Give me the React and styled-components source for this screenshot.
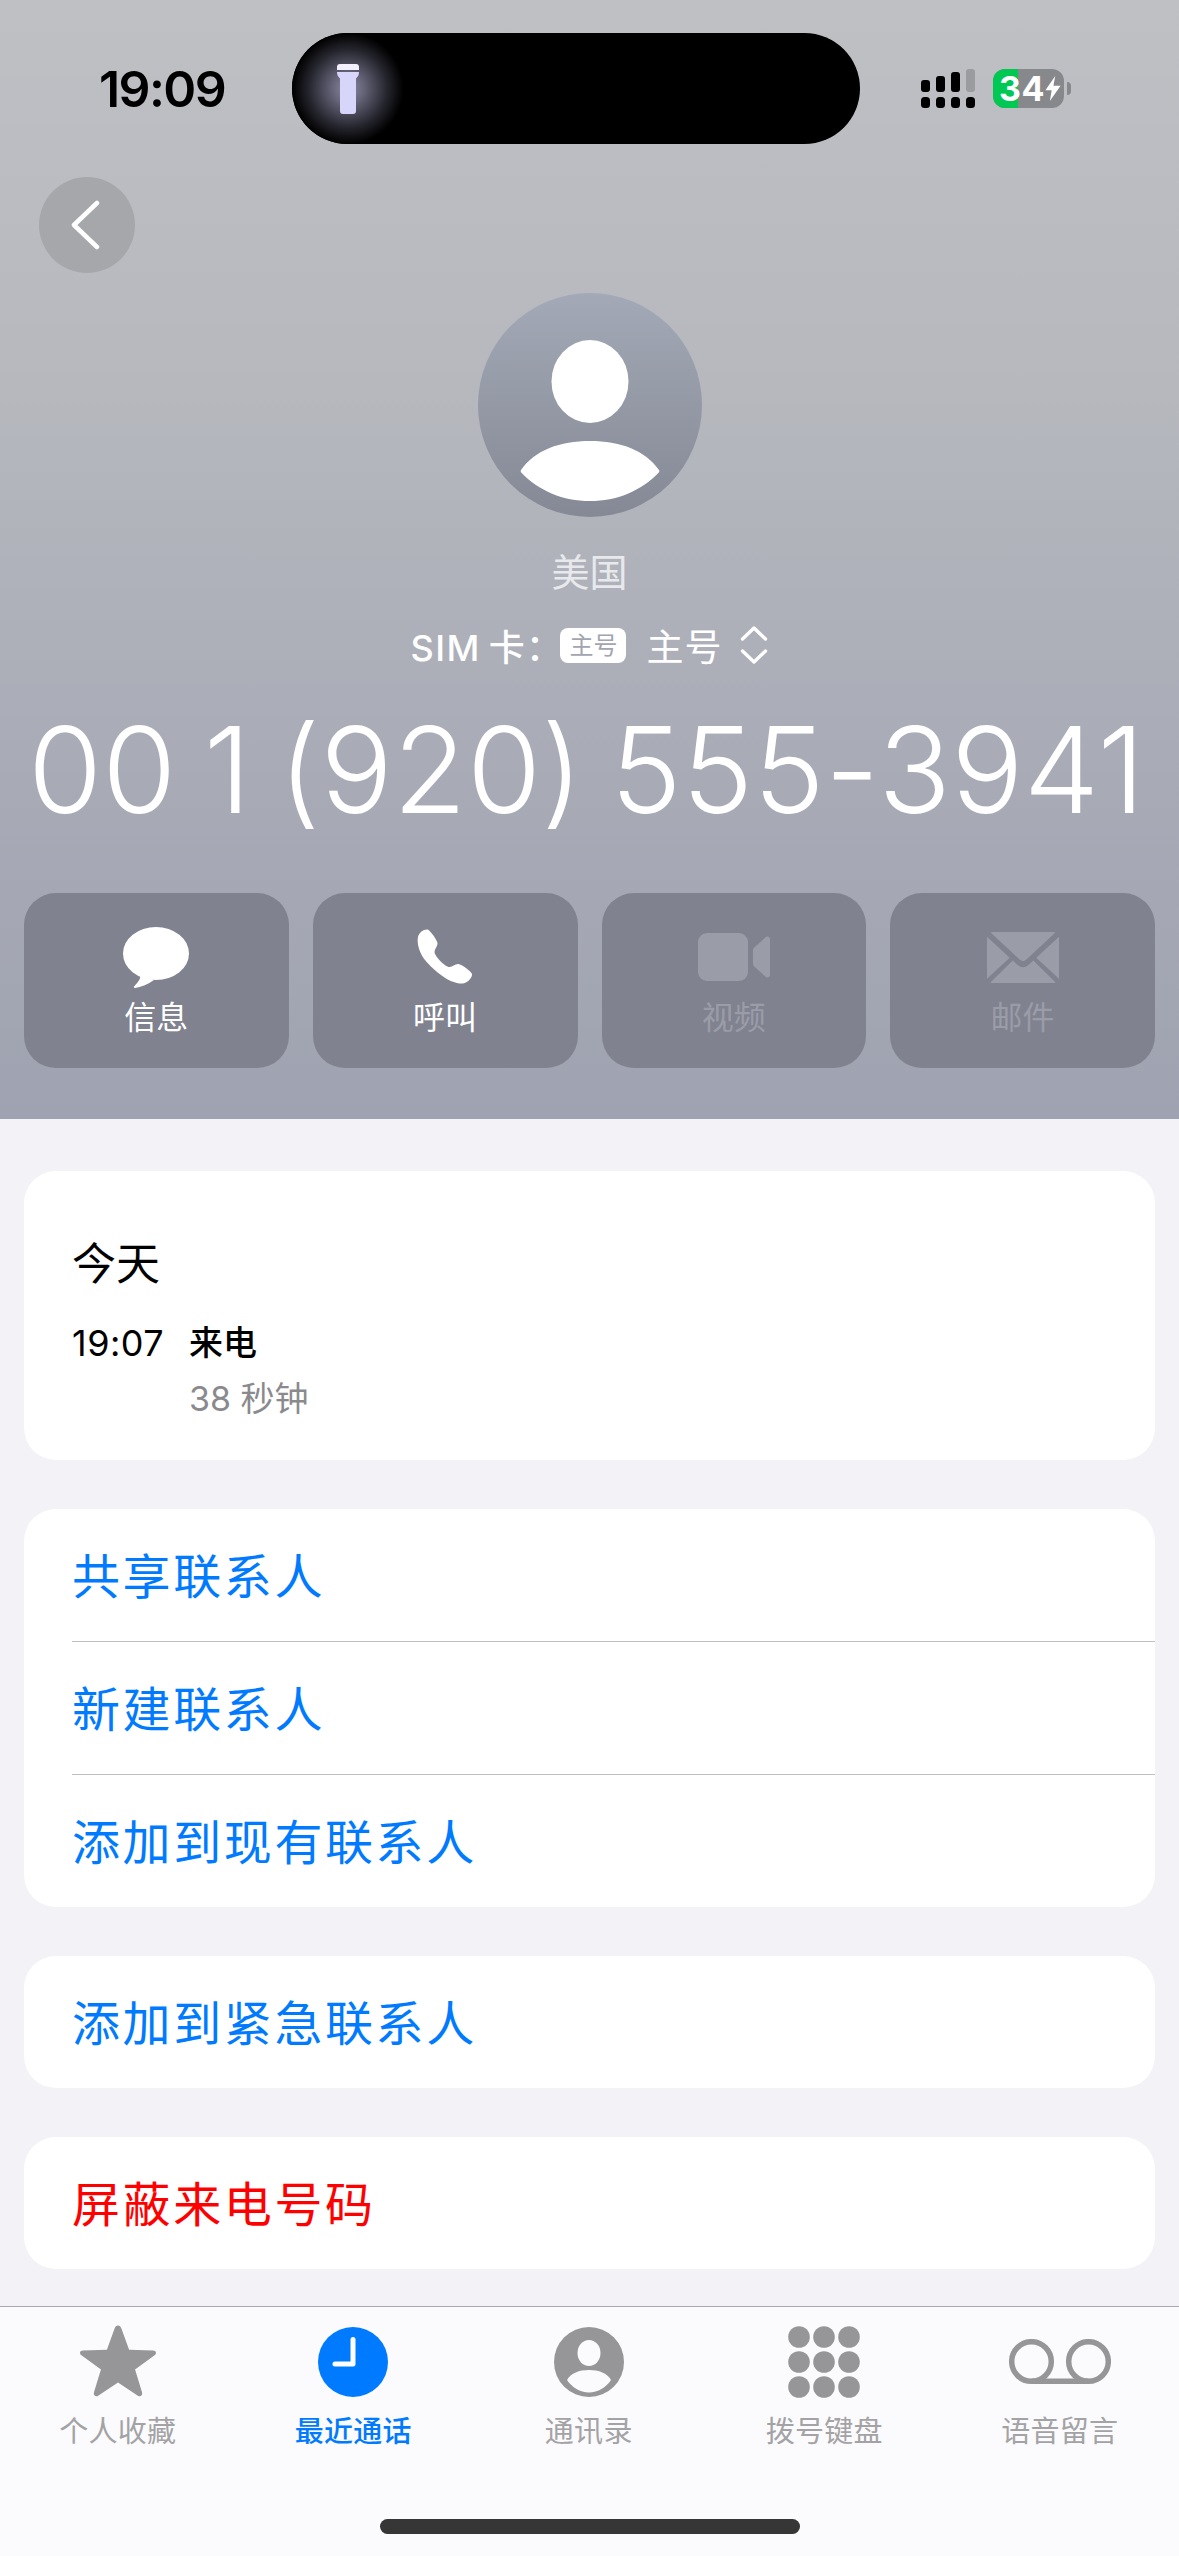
import React from "react";
import styled, { createGlobalStyle } from "styled-components";

const GlobalStyle = createGlobalStyle`
  * {
    box-sizing: border-box;
  }
  html,
  body {
    margin: 0;
    padding: 0;
    background: #f2f2f7;
  }
  body {
    font-family: "Inter", "Noto Sans CJK SC", sans-serif;
  }
`;

const actions = [
  { label: "信息", Icon: MessageIcon },
  { label: "呼叫", Icon: PhoneIcon },
  { label: "视频", Icon: VideoIcon, disabled: true },
  { label: "邮件", Icon: MailIcon, disabled: true },
];

const tabs = [
  { label: "个人收藏", Icon: StarIcon },
  { label: "最近通话", Icon: ClockIcon, active: true },
  { label: "通讯录", Icon: ContactIcon },
  { label: "拨号键盘", Icon: KeypadIcon },
  { label: "语音留言", Icon: VoicemailIcon },
];

function MessageIcon() {
  return (
    <svg width="66" height="61" viewBox="0 0 66 61" fill="#fff">
      <ellipse cx="33" cy="26.500" rx="33" ry="26.500" />
      <path d="M15 46c2.500 1.500 3.500 5-.5 9.500-1.500 1.700-2.500 3.200-3.500 4-.6.700.2 1.500 1 1.400 6-.5 12-3.200 19-7.900z" />
    </svg>
  );
}

function PhoneIcon() {
  return (
    <svg width="56" height="56" viewBox="0 0 56 56" fill="#fff">
      <path d="M1 8C2 3 7 0 10.500.5 13 1 20 11 20.500 14 21 17 17.500 20 17.500 23 17.500 27 28 38 32.500 38 35.500 38 38.500 34.500 41.500 35 44.500 35.500 54 42 55 45 55.500 48 51 54 46 54.500 34 55.500 18 43 8 31 3 25-.5 15 1 8z" />
    </svg>
  );
}

function VideoIcon() {
  return (
    <svg width="72" height="48" viewBox="0 0 72 48" fill="#9a9ca8">
      <rect x="0" y="0" width="50" height="48" rx="9" />
      <path d="M55 17.500c0-1.200.4-2.200 1.300-3L67.500 4.300c1.700-1.500 4.500-.5 4.500 1.800v35.800c0 2.300-2.800 3.300-4.500 1.800L56.300 33.500c-.9-.8-1.300-1.800-1.300-3z" />
    </svg>
  );
}

function MailIcon() {
  return (
    <svg width="72" height="51" viewBox="0 0 72 51" fill="#9a9ca8">
      <path d="M6 0h60c1 0 1.800.2 2.400.6L39.700 27.200c-1.300 1.200-2.500 1.800-3.700 1.800s-2.400-.6-3.700-1.800L3.600.6C4.200.2 5 0 6 0z" />
      <path d="M0 4.800 22.700 25.800 0 46.800zM72 4.800 49.300 25.800 72 46.800z" />
      <path d="M3.400 50.400 25.700 28.600l4 3.700c2.200 2 4.300 3 6.300 3s4.100-1 6.300-3l4-3.700 22.300 21.800c-.6.400-1.400.6-2.300.6H5.700c-.9 0-1.700-.2-2.300-.6z" />
    </svg>
  );
}

function StarIcon({ color }) {
  return (
    <svg width="76" height="74" viewBox="0 0 78 75" fill={color}>
      <path d="M39 0c1.700 0 2.800 1 3.500 3l7.900 21.900 24.600.7c2 .1 3 .9 3 2.400 0 1-.6 2-1.800 2.900L56.500 45.300l7 22.700c.5 1.700.4 3.100-.5 4-1.100 1.100-2.500 1-4-.1L39 58.500 19 71.900c-1.500 1.100-2.900 1.200-4 .1-.9-.9-1-2.300-.5-4l7-22.700L1.800 30.900C.6 30 0 29 0 28c0-1.500 1-2.300 3-2.400l24.600-.7L35.500 3c.7-2 1.800-3 3.500-3z" />
    </svg>
  );
}

function ClockIcon({ color }) {
  return (
    <svg width="70" height="70" viewBox="0 0 70 70">
      <circle cx="35" cy="35" r="35" fill={color} />
      <path d="M35 12.500v24.500H17" fill="none" stroke="#fff" strokeWidth="5" strokeLinecap="round" strokeLinejoin="round" />
    </svg>
  );
}

function ContactIcon({ color }) {
  return (
    <svg width="70" height="70" viewBox="0 0 70 70">
      <circle cx="35" cy="35" r="35" fill={color} />
      <ellipse cx="35" cy="26" rx="11.500" ry="13" fill="#fbfbfd" />
      <path d="M13 53C17 46 25 43 35 43s18 3 22 10C52 60.500 44 65.500 35 65.500S18 60.500 13 53z" fill="#fbfbfd" />
    </svg>
  );
}

function KeypadIcon({ color }) {
  const spots = [11, 36, 61];
  return (
    <svg width="72" height="72" viewBox="0 0 72 72" fill={color}>
      {spots.map((y) =>
        spots.map((x) => <circle key={`${x}-${y}`} cx={x} cy={y} r="10.800" />)
      )}
    </svg>
  );
}

function VoicemailIcon({ color }) {
  return (
    <svg width="102" height="46" viewBox="0 0 102 46" fill="none" stroke={color} strokeWidth="5.500">
      <circle cx="22.500" cy="22.500" r="19.800" />
      <circle cx="79.500" cy="22.500" r="19.800" />
      <path d="M22.500 42.300h57" />
    </svg>
  );
}

function SignalIcon() {
  const heights = [11, 15, 19];
  return (
    <svg width="54" height="39" viewBox="0 0 54 39" fill="#000">
      {heights.map((h, i) => (
        <rect key={h} x={i * 15} y={23 - h - 1} width="9" height={h + 1} rx="3" />
      ))}
      <rect x="45" y="0" width="9" height="23" rx="3" fill="#9b9c9f" />
      {[0, 15, 30, 45].map((x) => (
        <rect key={x} x={x} y="28" width="9" height="11" rx="3.500" />
      ))}
    </svg>
  );
}

function App() {
  return (
    <Screen>
      <GlobalStyle />
      <Header>
        <StatusBar>
          <Time>19:09</Time>
          <Island>
            <Glow>
              <svg width="24" height="50" viewBox="0 0 24 50">
                <path d="M1 3c0-1.700 1-3 3-3h16c2 0 3 1.300 3 3v3H1z" fill="#f4effd" />
                <path d="M1 8h22c0 3-1 4.500-3 6.500V47c0 1.800-1 3-3 3H7c-2 0-3-1.200-3-3V14.500C2 12.500 1 11 1 8z" fill="#d8d5fb" />
              </svg>
            </Glow>
          </Island>
          <StatusIcons>
            <SignalIcon />
            <Battery>
              <BatteryLevel />
              <BatteryText>34</BatteryText>
              <svg width="16" height="25" viewBox="0 0 17 28" fill="#fff">
                <path d="M11 0 0 16h7l-2 12L17 11H9z" />
              </svg>
            </Battery>
            <BatteryTip />
          </StatusIcons>
        </StatusBar>

        <BackButton aria-label="返回">
          <svg width="32" height="50" viewBox="0 0 32 50" fill="none" stroke="#fff" strokeWidth="4.500" strokeLinecap="round" strokeLinejoin="round">
            <path d="M28 3 5 25l23 22" />
          </svg>
        </BackButton>

        <Avatar>
          <svg width="224" height="224" viewBox="0 0 224 224" fill="#fff">
            <ellipse cx="112" cy="88.500" rx="38.500" ry="41.500" />
            <path d="M43 177C57 157 82 148 112 148s55 9 69 29c.5.700.5 1.500 0 2.200C163 198 139 208 112 208s-51-10-69-28.800c-.5-.7-.5-1.500 0-2.200z" />
          </svg>
        </Avatar>

        <Region>美国</Region>
        <SimRow>
          <SimLabel>SIM 卡：</SimLabel>
          <SimBadge>主号</SimBadge>
          <SimName>主号</SimName>
          <svg width="28" height="38" viewBox="0 0 28 38" fill="none" stroke="#fff" strokeWidth="3.400" strokeLinecap="round" strokeLinejoin="round">
            <path d="M2.500 13 14 2l11.500 11M2.500 25 14 36l11.500-11" />
          </svg>
        </SimRow>
        <PhoneNumber>00 1 (920) 555-3941</PhoneNumber>

        <Actions>
          {actions.map(({ label, Icon, disabled }) => (
            <ActionButton key={label} $disabled={disabled}>
              <ActionIcon>
                <Icon />
              </ActionIcon>
              <span>{label}</span>
            </ActionButton>
          ))}
        </Actions>
      </Header>

      <Content>
        <HistoryCard>
          <HistoryDate>今天</HistoryDate>
          <HistoryRow>
            <HistoryTime>19:07</HistoryTime>
            <div>
              <HistoryType>来电</HistoryType>
              <HistoryLength>38 秒钟</HistoryLength>
            </div>
          </HistoryRow>
        </HistoryCard>

        <Card>
          <Row>共享联系人</Row>
          <Row>新建联系人</Row>
          <Row>添加到现有联系人</Row>
        </Card>
        <Card>
          <Row>添加到紧急联系人</Row>
        </Card>
        <Card>
          <Row $danger>屏蔽来电号码</Row>
        </Card>
      </Content>

      <TabBar>
        <Tabs>
          {tabs.map(({ label, Icon, active }) => (
            <Tab key={label} $active={active}>
              <TabIcon>
                <Icon color={active ? "#007aff" : "#969698"} />
              </TabIcon>
              <span>{label}</span>
            </Tab>
          ))}
        </Tabs>
        <HomeIndicator />
      </TabBar>
    </Screen>
  );
}

const Screen = styled.div`
  width: 1179px;
  height: 2556px;
  display: flex;
  flex-direction: column;
  overflow: hidden;
  background: #f2f2f7;
`;

const Header = styled.header`
  height: 1119px;
  flex: none;
  padding-top: 33px;
  display: flex;
  flex-direction: column;
  background: linear-gradient(180deg, #bfc0c4 0%, #b6b8be 35%, #a8abb6 70%, #9fa2b0 100%);
`;

const StatusBar = styled.div`
  height: 111px;
  display: flex;
  align-items: center;
  padding-left: 99px;
`;

const Time = styled.div`
  width: 193px;
  font-size: 50px;
  font-weight: 600;
  letter-spacing: -1.600px;
  color: #000;
`;

const Island = styled.div`
  width: 568px;
  height: 111px;
  border-radius: 56px;
  background: #000;
  overflow: hidden;
`;

const Glow = styled.div`
  width: 112px;
  height: 111px;
  display: flex;
  align-items: center;
  justify-content: center;
  background: radial-gradient(circle closest-side, #8d8ca6 0%, #5b5a6d 35%, #23232b 72%, #000 100%);
`;

const StatusIcons = styled.div`
  margin-left: 61px;
  display: flex;
  align-items: center;
`;

const Battery = styled.div`
  position: relative;
  width: 71px;
  height: 39px;
  margin-left: 18px;
  border-radius: 12px;
  overflow: hidden;
  background: #87888c;
  display: flex;
  align-items: center;
  padding-left: 6px;
  color: #fff;
`;

const BatteryLevel = styled.div`
  position: absolute;
  left: 0;
  top: 0;
  bottom: 0;
  width: 25px;
  background: #00c853;
`;

const BatteryText = styled.span`
  position: relative;
  font-size: 34px;
  font-weight: 700;
  letter-spacing: 0.5px;
`;

const BatteryTip = styled.div`
  width: 4px;
  height: 13px;
  margin-left: 3px;
  border-radius: 0 4px 4px 0;
  background: #87888c;
`;

const BackButton = styled.button`
  width: 96px;
  height: 96px;
  margin: 33px 0 0 39px;
  padding: 0 5px 0 0;
  flex: none;
  border: none;
  border-radius: 50%;
  background: #a5a7ab;
  display: flex;
  align-items: center;
  justify-content: center;
`;

const Avatar = styled.div`
  width: 224px;
  height: 224px;
  margin: 20px auto 0;
  flex: none;
  border-radius: 50%;
  overflow: hidden;
  background: linear-gradient(180deg, #a4a9b7 0%, #858995 100%);
`;

const Region = styled.div`
  margin-top: 29px;
  text-align: center;
  font-size: 38px;
  line-height: 52px;
  color: #e8e9ec;
`;

const SimRow = styled.div`
  margin-top: 22px;
  height: 50px;
  display: flex;
  align-items: center;
  justify-content: center;
  color: #fff;
  svg {
    margin-left: 18px;
  }
`;

const SimLabel = styled.span`
  font-size: 36px;
  font-weight: 500;
  letter-spacing: 1.400px;
  word-spacing: -3px;
`;

const SimBadge = styled.span`
  width: 66px;
  height: 35px;
  margin: 0 20px 0 -3px;
  border-radius: 8px;
  background: #fff;
  color: #a2a5b0;
  font-size: 24px;
  line-height: 35px;
  text-align: center;
`;

const SimName = styled.span`
  font-size: 37px;
  letter-spacing: 1px;
`;

const PhoneNumber = styled.div`
  margin-top: 27px;
  padding-right: 6px;
  text-align: center;
  font-size: 120px;
  line-height: 146px;
  font-weight: 340;
  letter-spacing: 0.3px;
  word-spacing: -7px;
  white-space: nowrap;
  color: #fff;
`;

const Actions = styled.div`
  margin-top: 50px;
  padding: 0 24px;
  display: grid;
  grid-template-columns: repeat(4, 1fr);
  gap: 24px;
`;

const ActionButton = styled.div`
  height: 175px;
  padding-top: 31px;
  border-radius: 32px;
  background: #80828f;
  display: flex;
  flex-direction: column;
  align-items: center;
  font-size: 32px;
  line-height: 44px;
  color: ${(p) => (p.$disabled ? "#9a9ca8" : "#fff")};
`;

const ActionIcon = styled.div`
  height: 66px;
  margin-bottom: 6px;
  display: flex;
  align-items: center;
  justify-content: center;
`;

const Content = styled.main`
  flex: 1;
  padding: 52px 24px 0;
  display: flex;
  flex-direction: column;
  gap: 49px;
`;

const Card = styled.section`
  border-radius: 32px;
  background: #fff;
  overflow: hidden;
`;

const HistoryCard = styled(Card)`
  height: 289px;
  padding: 64px 48px 0;
`;

const HistoryDate = styled.div`
  font-size: 44px;
  line-height: 58px;
  color: #000;
`;

const HistoryRow = styled.div`
  margin-top: 27px;
  display: flex;
`;

const HistoryTime = styled.div`
  width: 117px;
  font-size: 36px;
  line-height: 46px;
  letter-spacing: 0.5px;
  color: #000;
`;

const HistoryType = styled.div`
  font-size: 34px;
  line-height: 46px;
  font-weight: 500;
  color: #000;
`;

const HistoryLength = styled.div`
  margin-top: 10px;
  font-size: 34px;
  line-height: 46px;
  color: #8a8a8e;
`;

const Row = styled.div`
  height: 132px;
  margin-left: 48px;
  padding-bottom: 4px;
  display: flex;
  align-items: center;
  font-size: 48px;
  letter-spacing: 2.600px;
  color: ${(p) => (p.$danger ? "#ff0000" : "#007aff")};
  & + & {
    height: 133px;
    border-top: 1px solid #bfbfc1;
  }
`;

const TabBar = styled.footer`
  height: 250px;
  flex: none;
  border-top: 1px solid #a9a9ab;
  background: #fbfbfd;
  display: flex;
  flex-direction: column;
  align-items: center;
`;

const Tabs = styled.nav`
  width: 100%;
  display: grid;
  grid-template-columns: repeat(5, 235.500px);
  padding-top: 15px;
`;

const Tab = styled.div`
  display: flex;
  flex-direction: column;
  align-items: center;
  font-size: 29px;
  line-height: 40px;
  letter-spacing: 0.3px;
  font-weight: ${(p) => (p.$active ? 500 : 400)};
  color: ${(p) => (p.$active ? "#007aff" : "#a3a3a5")};
`;

const TabIcon = styled.div`
  height: 80px;
  margin-bottom: 10px;
  display: flex;
  align-items: center;
  justify-content: center;
`;

const HomeIndicator = styled.div`
  width: 420px;
  height: 15px;
  margin-top: 67px;
  border-radius: 8px;
  background: #363636;
`;

export default App;
